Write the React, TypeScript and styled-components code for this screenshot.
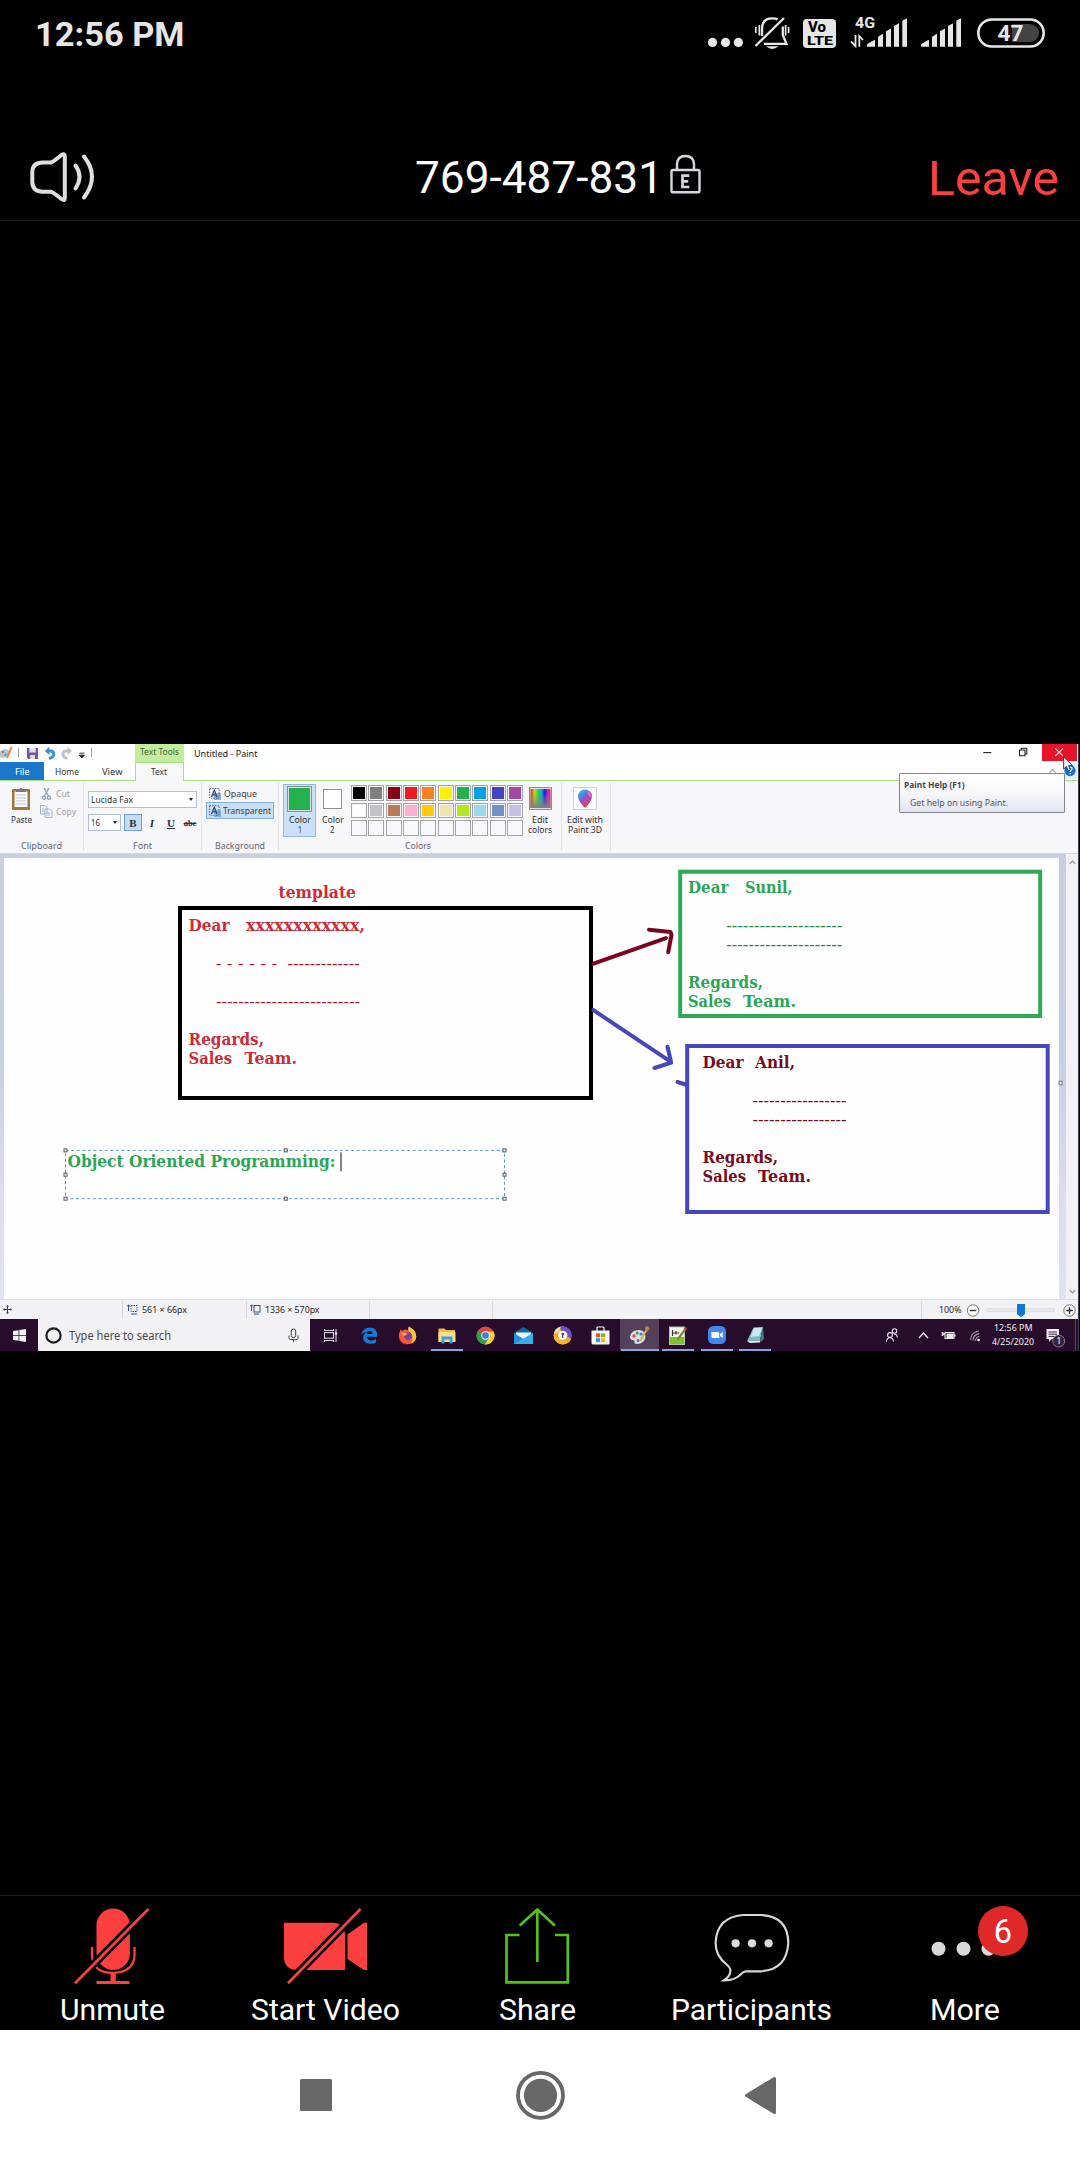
import React, { useLayoutEffect, useRef, useState } from "react";
import styled, { createGlobalStyle } from "styled-components";

const Global = createGlobalStyle`
  html, body { margin: 0; padding: 0; background: #000; }
  * { box-sizing: border-box; }
  svg { display: block; flex: none; }
`;

const Screen = styled.div`
  width: 1080px;
  height: 2160px;
  background: #000;
  display: flex;
  flex-direction: column;
  overflow: hidden;
  font-family: Roboto, "Liberation Sans", sans-serif;
  color: #fff;
`;

/* ---------- text that is condensed to a given width ---------- */
const FitBox = styled.span<{ $w: number }>`
  display: flex;
  flex: none;
  width: ${(p) => p.$w}px;
  white-space: pre;
`;
const FitInner = styled.span`
  flex: none;
  width: max-content;
  transform-origin: 0 50%;
`;
function Fit({ w, children }: { w: number; children: React.ReactNode }) {
  const ref = useRef<HTMLSpanElement>(null);
  const [scale, setScale] = useState(1);
  useLayoutEffect(() => {
    if (ref.current && ref.current.offsetWidth) {
      setScale(w / parseFloat(getComputedStyle(ref.current).width));
    }
  }, [w]);
  return (
    <FitBox $w={w}>
      <FitInner ref={ref} style={{ transform: `scaleX(${scale})` }}>{children}</FitInner>
    </FitBox>
  );
}

const Gap = styled.span<{ $w: number }>`
  flex: none;
  width: ${(p) => p.$w}px;
`;

/* ---------- phone status bar ---------- */
const StatusBar = styled.header`
  height: 68px;
  flex: none;
  display: flex;
  align-items: center;
  justify-content: space-between;
  padding: 0 35px 0 35px;
  color: #e6e6e6;
`;
const Clock = styled.div`
  font-size: 34px;
  font-weight: 700;
  line-height: 40px;
`;

function StatusIcons() {
  const bars = [
    "M0 28.5 L0 26.5 Q0 25.6 8 21.5 V28.5Z",
    "M11 18.5 L16 15.5 V28.5 H11Z",
    "M19 13 L24 10.2 V28.5 H19Z",
    "M27 7.6 L32 5 V28.5 H27Z",
    "M35.3 2.4 L40 0 V28.5 H35.3Z",
  ];
  return (
    <svg width="338" height="48" viewBox="707 10 338 48" fill="#e6e6e6">
      <circle cx="712.5" cy="42.4" r="4.6" />
      <circle cx="725.5" cy="42.4" r="4.6" />
      <circle cx="738.4" cy="42.4" r="4.6" />
      <g fill="none" stroke="#e6e6e6" strokeWidth="2.3">
        <path d="M755.5 46 L784 18" />
        <path d="M762 36 V29 Q762 18.4 772.3 18.4 Q775.5 18.4 777.5 19.4" />
        <path d="M782.8 26.5 V35 L786.5 43.8 H764" />
        <path d="M755.8 27 V33 M759.3 25 V35.5 M785.6 25 V35.5 M788.6 27 V33" strokeWidth="1.7" />
      </g>
      <path d="M766 46.3 H778.5 Q772.2 51.5 766 46.3Z" />
      <rect x="803" y="19" width="33" height="29" rx="4" />
      <g fill="#000" fontFamily="Roboto, sans-serif" fontWeight="800">
        <text x="808" y="32" fontSize="14" textLength="18" lengthAdjust="spacingAndGlyphs">Vo</text>
        <text x="807" y="45" fontSize="13.5" textLength="26" lengthAdjust="spacingAndGlyphs">LTE</text>
      </g>
      <text x="855" y="28" fontSize="15.5" fontWeight="700" fontFamily="Roboto, sans-serif" textLength="20" lengthAdjust="spacingAndGlyphs">4G</text>
      <g fill="none" stroke="#e6e6e6" strokeWidth="1.8">
        <path d="M855.5 35 V46 L851 41.5" />
        <path d="M859.3 46.7 V36 L863 40" />
      </g>
      <g transform="translate(867 18.3)">{bars.map((d) => <path key={d} d={d} />)}</g>
      <g transform="translate(921 18.3)">{bars.map((d) => <path key={d} d={d} />)}</g>
      <path d="M1012 24 H1030 A9 9 0 0 1 1030 42 H1012Z" fill="#434343" />
      <rect x="978.3" y="19.5" width="65.4" height="27" rx="13.5" fill="none" stroke="#e6e6e6" strokeWidth="2.6" />
      <text x="997.6" y="41.2" fontSize="22" fontWeight="700" fontFamily="Roboto, sans-serif" textLength="26" lengthAdjust="spacingAndGlyphs">47</text>
    </svg>
  );
}

/* ---------- meeting header ---------- */
const MeetingHeader = styled.div`
  height: 153px;
  flex: none;
  border-bottom: 1px solid #1c1c1c;
  display: grid;
  grid-template-columns: 1fr auto 1fr;
  align-items: start;
  padding: 80px 21px 0 30px;
`;
const MeetingId = styled.div`
  display: flex;
  align-items: flex-start;
  gap: 7px;
  font-size: 44.5px;
  line-height: 60px;
  margin-left: 27px;
`;
const LockWrap = styled.span`
  display: block;
  padding-top: 6px;
`;
const SpeakerButton = styled.button`
  all: unset;
  width: 66px;
  padding-top: 3px;
`;
const LeaveButton = styled.button`
  all: unset;
  justify-self: end;
  color: #fb403e;
  font-size: 49px;
  line-height: 61px;
`;

/* ---------- shared desktop ---------- */
const Stage = styled.main`
  height: 1675px;
  flex: none;
  border-bottom: 1px solid #1c1c1c;
  padding-top: 523px;
`;
const Desktop = styled.section`
  width: 1079px;
  height: 607px;
  background: #fff;
  display: flex;
  flex-direction: column;
  font-family: "Noto Sans", "Open Sans", sans-serif;
  font-size: 8.7px;
  line-height: 10px;
  color: #303036;
  border-right: 1px solid #3c3f58;
`;
const TitleBar = styled.div`
  height: 18px;
  flex: none;
  display: flex;
  align-items: stretch;
  background: #fefefe;
`;
const QuickAccess = styled.div`
  width: 135px;
  flex: none;
`;
const ContextTab = styled.div`
  width: 49px;
  background: #c3ec9d;
  padding: 3px 0 0 5px;
  color: #416a35;
`;
const WindowTitle = styled.div`
  padding: 5px 0 0 10px;
  flex: 1;
  color: #222;
`;
const WindowButtons = styled.div`
  display: flex;
`;
const TabRow = styled.div`
  height: 19px;
  flex: none;
  display: flex;
  border-bottom: 1px solid #a9db83;
  position: relative;
`;
const Tab = styled.div<{ $w: number; $pad: number; $kind?: "file" | "active" }>`
  width: ${(p) => p.$w}px;
  padding: 5px 0 0 ${(p) => p.$pad}px;
  ${(p) => p.$kind === "file" && "background: #1a77c9; color: #fff;"}
  ${(p) =>
    p.$kind === "active" &&
    "background: #f7f8f8; border: 1px solid #a9db83; border-bottom: 0; height: 19px; padding-top: 4px;"}
`;
const HelpArea = styled.div`
  margin-left: auto;
`;
const Tooltip = styled.div`
  position: absolute;
  left: 899px;
  top: 11px;
  width: 166px;
  height: 40px;
  border: 1px solid #85858d;
  border-radius: 1px;
  background: linear-gradient(#fff, #f7f7fb 50%, #e2e5f2);
  padding: 6px 0 0 4px;
  color: #55555c;
  z-index: 2;
`;
const TooltipTitle = styled.div`
  font-weight: 700;
  color: #45454b;
`;
const TooltipText = styled.div`
  padding: 8px 0 0 6px;
`;
const Cursor = styled.div`
  position: absolute;
  right: 4px;
  top: -6px;
  z-index: 3;
`;
const Ribbon = styled.div`
  height: 73px;
  flex: none;
  display: flex;
  background: #f7f6f9;
  border-bottom: 1px solid #d5d8e2;
  padding-top: 2px;
`;
const Group = styled.div<{ $w: number }>`
  width: ${(p) => p.$w}px;
  height: 68px;
  flex: none;
  display: flex;
  flex-direction: column;
  border-right: 1px solid #e1e1e7;
`;
const GroupBody = styled.div`
  height: 58px;
  flex: none;
  display: flex;
`;
const GroupName = styled.div`
  display: flex;
  justify-content: center;
  color: #64646c;
`;
const Column = styled.div<{ $w: number; $top?: number; $gap?: number }>`
  width: ${(p) => p.$w}px;
  flex: none;
  display: flex;
  flex-direction: column;
  align-items: center;
  padding-top: ${(p) => p.$top ?? 4}px;
  gap: ${(p) => p.$gap ?? 0}px;
`;
const SmallTool = styled.div<{ $muted?: boolean; $on?: boolean; $pad: number; $gap: number }>`
  display: flex;
  align-items: center;
  gap: ${(p) => p.$gap}px;
  padding-left: ${(p) => p.$pad}px;
  height: 17px;
  width: 100%;
  color: ${(p) => (p.$muted ? "#a0a0a6" : "#3c3c42")};
  ${(p) => p.$on && "background: #c9dff6; box-shadow: inset 0 0 0 1px #84aede;"}
`;
const FontArea = styled.div`
  padding: 8px 0 0 4px;
  display: flex;
  flex-direction: column;
  gap: 6px;
`;
const FontRow = styled.div`
  display: flex;
  align-items: center;
`;
const Combo = styled.div<{ $w: number }>`
  width: ${(p) => p.$w}px;
  height: 17px;
  background: #fff;
  border: 1px solid #b4bfd6;
  display: flex;
  align-items: center;
  justify-content: space-between;
  padding: 0 3px 0 2px;
`;
const Arrow = styled.i`
  border: 2.5px solid transparent;
  border-top: 3px solid #222;
  border-bottom: 0;
`;
const StyleButton = styled.div<{ $on?: boolean; $kind: "b" | "i" | "u" | "s" }>`
  width: 18px;
  height: 17px;
  margin-right: 1px;
  display: flex;
  align-items: center;
  justify-content: center;
  font-family: "Liberation Serif", serif;
  font-weight: 700;
  font-size: ${(p) => (p.$kind === "s" ? 8.5 : 11)}px;
  color: #2b3242;
  ${(p) => p.$on && "background: #c5dcf6; border: 1px solid #6d9ed6;"}
  ${(p) => p.$kind === "i" && "font-style: italic;"}
  ${(p) => p.$kind === "u" && "text-decoration: underline;"}
  ${(p) => p.$kind === "s" && "text-decoration: line-through;"}
`;
const ColorSlot = styled.div<{ $on?: boolean }>`
  width: 33px;
  height: 53px;
  margin-top: 1px;
  display: flex;
  flex-direction: column;
  align-items: center;
  ${(p) => p.$on && "background: #cbe0f6; box-shadow: inset 0 0 0 1px #92b9e2;"}
`;
const SlotSwatch = styled.div<{ $s: number; $c: string }>`
  width: ${(p) => p.$s}px;
  height: ${(p) => p.$s}px;
  margin: ${(p) => (28.5 - p.$s) / 2 + 0.5}px 0;
  flex: none;
  border: 1px solid #8a8f96;
  background: ${(p) => p.$c};
  box-shadow: inset 0 0 0 1px ${(p) => (p.$s > 20 ? "#d7dfe0" : "#fff")};
`;
const SlotLabel = styled.div`
  display: flex;
  flex-direction: column;
  align-items: center;
  padding-top: 1px;
`;
const Palette = styled.div`
  display: grid;
  grid-template-columns: repeat(10, 16px);
  grid-auto-rows: 15.7px;
  gap: 1.65px 1.33px;
  padding: 2.3px 0 0 2px;
  width: 179px;
  align-content: start;
`;
const Swatch = styled.div<{ $c?: string }>`
  border: 1px solid #a3a3a8;
  background: ${(p) => p.$c ?? "#f8f8fb"};
  box-shadow: inset 0 0 0 1px ${(p) => (p.$c ? "#f6f6f8" : "#fafafc")};
`;
const Workspace = styled.div`
  height: 445px;
  flex: none;
  display: flex;
  background: linear-gradient(#c9cfdf, #c6cfe3 45%, #dcdbef 75%, #dfe3f2);
`;
const PaintCanvas = styled.div`
  width: 1055px;
  margin: 4px 0 0 4px;
  background: #fefefe;
`;
const Gutter = styled.div`
  flex: 1;
`;
const ScrollBar = styled.div`
  width: 12px;
  background: #f3f1f6;
  display: flex;
  flex-direction: column;
  justify-content: space-between;
  align-items: center;
  padding: 6px 0 5px;
`;
const PaintStatus = styled.div`
  height: 20px;
  flex: none;
  display: flex;
  align-items: center;
  background: #f2f1f5;
  border-top: 1px solid #dcdce2;
  color: #26262c;
`;
const StatusCell = styled.div<{ $w?: number; $pad: number }>`
  ${(p) => (p.$w ? `width: ${p.$w}px;` : "flex: 1;")}
  height: 18px;
  display: flex;
  align-items: center;
  gap: 4px;
  padding-left: ${(p) => p.$pad}px;
  border-right: 1px solid #d6d6dc;
`;
const ZoomArea = styled.div`
  width: 156px;
  padding-left: 17px;
  display: flex;
  align-items: center;
`;
const Taskbar = styled.div`
  height: 32px;
  flex: none;
  display: flex;
  background: #270d2b;
`;
const StartButton = styled.div`
  width: 38px;
  display: flex;
  align-items: center;
  justify-content: center;
`;
const SearchBox = styled.div`
  width: 272px;
  margin-right: 1.5px;
  background: #f2f1f3;
  display: flex;
  align-items: center;
  padding: 1px 11px 0 7px;
  gap: 7px;
  font-size: 12px;
  line-height: 16px;
  color: #48484c;
  & > svg:last-child { margin-left: auto; }
`;
const TaskIcon = styled.div<{ $running?: boolean; $active?: boolean }>`
  width: 38.6px;
  flex: none;
  display: flex;
  align-items: center;
  justify-content: center;
  ${(p) => p.$active && "background: #544058;"}
  ${(p) => p.$running && "background-image: linear-gradient(#7fa9dc, #7fa9dc); background-size: " + (p.$active ? "38px" : "32px") + " 2px; background-repeat: no-repeat; background-position: 50% 100%;"}
`;
const Tray = styled.div`
  margin-left: auto;
  width: 192px;
  display: flex;
  align-items: center;
  color: #f0eef2;
  font-size: 9px;
`;
const TrayClock = styled.div`
  display: flex;
  flex-direction: column;
  align-items: center;
  gap: 4px;
  width: 42px;
  margin: 0 12px 0 11px;
`;

/* ---------- bottom toolbar ---------- */
const Controls = styled.nav`
  height: 134px;
  flex: none;
  display: grid;
  grid-template-columns: 225px 200px 225px 203px 223px;
  font-size: 30px;
  line-height: 36px;
`;
const Control = styled.button`
  all: unset;
  display: flex;
  flex-direction: column;
  align-items: center;
  position: relative;
`;
const ControlIcon = styled.span`
  height: 96px;
  padding-top: 8px;
`;
const Badge = styled.span`
  position: absolute;
  left: 125px;
  top: 10px;
  width: 50px;
  height: 50px;
  border-radius: 50%;
  background: #e02828;
  font-size: 32.5px;
  line-height: 52px;
  text-align: center;
`;

/* ---------- system navigation ---------- */
const SystemNav = styled.footer`
  flex: 1;
  background: #fff;
  display: flex;
  justify-content: center;
  padding-top: 36px;
`;

function QuickIcons() {
  return (
    <svg width="135" height="18" viewBox="0 744 135 18">
      <path d="M0 751 Q6 747 9 751 Q8 758 2 758 L0 757Z" fill="#b5c8d2" />
      <circle cx="3" cy="752" r="1.2" fill="#d25a52" /><circle cx="5.5" cy="755" r="1.2" fill="#5b95c8" />
      <path d="M7 758 L11.5 747" stroke="#d98c45" strokeWidth="2" />
      <path d="M18.5 748 V757 M91.5 748 V757" stroke="#9b9ba3" />
      <path d="M27 748 H38 V759 H28.5 L27 757.5Z" fill="#735798" />
      <path d="M29.3 748 H35.8 V752.5 H29.3Z M30.2 755 H35 V759 H30.2Z" fill="#e4dcef" />
      <path d="M47 751 H51 Q54.2 751.5 53.8 754.8 Q53.3 757.8 49 758.3" fill="none" stroke="#3b92cf" strokeWidth="2.8" />
      <path d="M44.7 751 L49.3 746.8 V755Z" fill="#3b92cf" />
      <path d="M69.5 751 H65.8 Q62.6 751.5 63 754.8 Q63.5 757.8 67.5 758.3" fill="none" stroke="#bcc3cb" strokeWidth="2.8" />
      <path d="M72 751 L67.5 746.8 V755Z" fill="#bcc3cb" />
      <path d="M79.3 753.2 H84.4 M79.3 755.2 H84.4 L81.8 758Z" stroke="#222" strokeWidth=".9" fill="#222" />
    </svg>
  );
}

function WindowControlIcons() {
  return (
    <svg width="104" height="18" viewBox="974 744 104 18" fill="none" stroke="#222" strokeWidth="1.1">
      <path d="M983.3 752.6 H991.3" />
      <path d="M1019.5 750 H1025 V755.8 H1019.5Z M1021.3 750 V748.3 H1026.8 V754 H1025" />
      <rect x="1042" y="744" width="35" height="17" fill="#e61428" stroke="none" />
      <path d="M1055.3 748.3 L1063 756 M1063 748.3 L1055.3 756" stroke="#ffd9dc" />
    </svg>
  );
}

function TextIcon() {
  return (
    <svg width="12" height="12" viewBox="0 0 12 12">
      <rect x="5" y="5" width="7" height="7" fill="#7fb5ec" />
      <rect x=".6" y=".6" width="9.5" height="9.6" fill="none" stroke="#4a5f80" strokeDasharray="1.4 1.2" />
      <path d="M2.5 9 L5.3 2.2 L8 9 M3.5 6.8 H7.2" fill="none" stroke="#34446a" strokeWidth="1.2" />
    </svg>
  );
}

const paletteColors = [
  "#000", "#7f7f7f", "#880015", "#ed1c24", "#ff7f27", "#fff200", "#22b14c", "#00a2e8", "#4643c8", "#a349a4",
  "#fff", "#c3c3c3", "#b97a57", "#ffaec9", "#ffc90e", "#efe4b0", "#b5e61d", "#99d9ea", "#7092be", "#c8bfe7",
];

function PaintRibbon() {
  return (
    <Ribbon>
      <Group $w={84}>
        <GroupBody>
          <Column $w={42} $gap={5}>
            <svg width="20" height="23" viewBox="0 0 20 23">
              <rect x="1" y="2" width="18" height="21" rx="1" fill="#a0753e" />
              <rect x="3.5" y="4.5" width="13" height="15.5" fill="#f7f9fb" />
              <path d="M5 8 H15 M5 11 H15 M5 14 H15 M5 17 H15" stroke="#b7c5d6" />
              <path d="M5 5 V2.5 H8 Q10 -1 12 2.5 H15 V5Z" fill="#767b82" />
            </svg>
            <Fit w={21}>Paste</Fit>
          </Column>
          <Column $w={41} $top={2} $gap={1}>
            <SmallTool $muted $pad={0} $gap={3}>
              <svg width="11" height="12" viewBox="0 0 11 12" fill="none" stroke="#93a3b5" strokeWidth="1.4">
                <path d="M2 0 L6.5 8 M7 0 L2.5 8" /><circle cx="2" cy="9.7" r="1.6" /><circle cx="7" cy="9.7" r="1.6" />
              </svg>
              <Fit w={14}>Cut</Fit>
            </SmallTool>
            <SmallTool $muted $pad={0} $gap={3}>
              <svg width="11" height="13" viewBox="1 0 11 13" overflow="visible" fill="#f6f8fb" stroke="#a0b2cc">
                <path d="M-.5 .5 H4 L6 2.5 V9 H-.5Z M4 4 H8.5 L11 6.3 V12.5 H4Z M1 4 H3 M1 6 H3 M6 8 H9 M6 10 H9" />
              </svg>
              <Fit w={20}>Copy</Fit>
            </SmallTool>
          </Column>
        </GroupBody>
        <GroupName><Fit w={41}>Clipboard</Fit></GroupName>
      </Group>
      <Group $w={118}>
        <GroupBody>
          <FontArea>
            <Combo $w={109}><Fit w={42}>Lucida Fax</Fit><Arrow /></Combo>
            <FontRow>
              <Combo $w={33}><Fit w={9}>16</Fit><Arrow /></Combo>
              <Gap $w={3} />
              <StyleButton $kind="b" $on>B</StyleButton>
              <StyleButton $kind="i">I</StyleButton>
              <StyleButton $kind="u">U</StyleButton>
              <StyleButton $kind="s">abc</StyleButton>
            </FontRow>
          </FontArea>
        </GroupBody>
        <GroupName><Fit w={19}>Font</Fit></GroupName>
      </Group>
      <Group $w={77}>
        <GroupBody>
          <Gap $w={4} />
          <Column $w={68} $top={2}>
            <SmallTool $pad={3} $gap={3}><TextIcon /><Fit w={33}>Opaque</Fit></SmallTool>
            <SmallTool $on $pad={3} $gap={2}><TextIcon /><Fit w={48}>Transparent</Fit></SmallTool>
          </Column>
        </GroupBody>
        <GroupName><Fit w={50}>Background</Fit></GroupName>
      </Group>
      <Group $w={283}>
        <GroupBody>
          <Gap $w={4} />
          <ColorSlot $on>
            <SlotSwatch $s={25.5} $c="#22b14c" />
            <SlotLabel><Fit w={22}>Color</Fit><Fit w={4}>1</Fit></SlotLabel>
          </ColorSlot>
          <ColorSlot>
            <SlotSwatch $s={19.5} $c="#fff" />
            <SlotLabel><Fit w={22}>Color</Fit><Fit w={4.5}>2</Fit></SlotLabel>
          </ColorSlot>
          <Palette>
            {Array.from({ length: 30 }, (_, i) => <Swatch key={i} $c={paletteColors[i]} />)}
          </Palette>
          <Column $w={24}>
            <ColorfulIcon />
            <SlotLabel><Fit w={16}>Edit</Fit><Fit w={24}>colors</Fit></SlotLabel>
          </Column>
        </GroupBody>
        <GroupName><Fit w={26}>Colors</Fit><Gap $w={4} /></GroupName>
      </Group>
      <Group $w={49}>
        <GroupBody>
          <Column $w={46} $top={4}>
            <Paint3DIcon />
            <SlotLabel><Fit w={36}>Edit with</Fit><Fit w={34}>Paint 3D</Fit></SlotLabel>
          </Column>
        </GroupBody>
      </Group>
    </Ribbon>
  );
}

function ColorfulIcon() {
  return (
    <svg width="23" height="27" viewBox="0 0 23 27">
      <defs>
        <linearGradient id="hue">
          <stop offset="0" stopColor="#c8342c" /><stop offset=".2" stopColor="#c6d31b" /><stop offset=".4" stopColor="#22d34e" />
          <stop offset=".55" stopColor="#18a6d8" /><stop offset=".72" stopColor="#1a1ed8" /><stop offset=".86" stopColor="#d51ee0" /><stop offset="1" stopColor="#e0303a" />
        </linearGradient>
        <linearGradient id="fadeGrey" x2="0" y2="1"><stop offset=".25" stopColor="#888" stopOpacity="0" /><stop offset="1" stopColor="#808080" /></linearGradient>
      </defs>
      <rect x=".5" y=".5" width="22" height="22" fill="#ddd" stroke="#8f8f93" />
      <rect x="1.5" y="2" width="20" height="19" fill="url(#hue)" />
      <rect x="1.5" y="2" width="20" height="19" fill="url(#fadeGrey)" />
    </svg>
  );
}

function Paint3DIcon() {
  return (
    <svg width="24" height="27" viewBox="0 0 24 27">
      <defs>
        <linearGradient id="drop" x1="0" y1="0" x2=".6" y2="1">
          <stop offset="0" stopColor="#3ad0e6" /><stop offset=".35" stopColor="#4a86e4" /><stop offset=".6" stopColor="#a34bc4" /><stop offset="1" stopColor="#e8423c" />
        </linearGradient>
      </defs>
      <rect x=".5" y=".5" width="23" height="22" fill="#fbfbfc" stroke="#cfcfd4" />
      <path d="M12 21 Q5 14 5 9 A7 6.5 0 0 1 19 9 Q19 14 12 21Z" fill="url(#drop)" />
      <path d="M14 4 Q18.5 6 18.5 10 Q15 10 14 4Z" fill="#e36fc4" />
    </svg>
  );
}

type Word = [number, number, number, string];
function Writing({ words, color, weight = 700 }: { words: Word[]; color: string; weight?: number }) {
  return (
    <g fill={color} fontFamily="'DejaVu Serif', serif" fontWeight={weight} fontSize="15.8">
      {words.map(([x, y, w, t]) => (
        <text key={`${x}-${y}`} x={x} y={y - 0.8} textLength={w} lengthAdjust="spacingAndGlyphs">{t}</text>
      ))}
    </g>
  );
}

const handles: [number, number][] = [
  [66, 1150.7], [286.3, 1150.7], [505, 1150.7], [66, 1175], [505, 1175], [66, 1199], [286.3, 1199], [505, 1199],
];

function Drawing() {
  return (
    <svg width="1062" height="441" viewBox="4.5 858.3 1062 441">
      <rect x="180.5" y="908.3" width="411" height="190" fill="none" stroke="#000" strokeWidth="4" />
      <rect x="680.7" y="872" width="360" height="144.3" fill="none" stroke="#2fa957" strokeWidth="4" />
      <rect x="687.7" y="1046.3" width="360.5" height="166" fill="none" stroke="#4747bd" strokeWidth="4" />
      <g fill="none" strokeWidth="4" strokeLinecap="round" strokeLinejoin="round">
        <path d="M594 964 L666.5 938.5 M649.5 930 L671 932.3 L672 935.5 L668.7 952.5" stroke="#7a0420" />
        <path d="M594 1010.5 L671 1062 M668 1047 L671.7 1063 L655 1068.3 M678 1082.3 L686 1084.8" stroke="#4747bd" />
      </g>
      <Writing color="#cb2c36" words={[
        [279, 899, 77.5, "template"], [189, 932, 41, "Dear"], [246.5, 932, 119, "xxxxxxxxxxxx,"],
        [189, 1046, 75.5, "Regards,"], [189, 1065, 43.5, "Sales"], [245, 1065, 52.5, "Team."],
      ]} />
      <Writing color="#a01c34" weight={400} words={[
        [216.2, 970, 61.5, "- - - - - -"], [288, 970, 72.3, "-------------"], [216.5, 1008, 144, "--------------------------"],
      ]} />
      <Writing color="#2ba657" words={[
        [688.5, 894, 40.5, "Dear"], [745.5, 894, 47.5, "Sunil,"], [688.5, 989, 75, "Regards,"], [688.5, 1008, 43, "Sales"], [743.5, 1008, 53, "Team."],
        [68, 1168, 268, "Object Oriented Programming:"],
      ]} />
      <Writing color="#23894f" weight={400} words={[[726.8, 932, 116, "---------------------"], [726.8, 951, 116, "---------------------"]]} />
      <Writing color="#760a20" words={[
        [703, 1069, 41, "Dear"], [755.5, 1069, 40, "Anil,"], [703, 1164, 75.5, "Regards,"], [703, 1183, 43.5, "Sales"], [758.5, 1183, 53, "Team."],
      ]} />
      <Writing color="#760a20" weight={400} words={[[753, 1107, 94, "-----------------"], [753, 1126, 94, "-----------------"]]} />
      <rect x="66" y="1150.7" width="439" height="48.3" fill="none" stroke="#5a98c0" strokeDasharray="3 2.6" />
      <path d="M341.5 1152.5 V1171.5" stroke="#222" strokeWidth="1.1" />
      {handles.map(([x, y]) => (
        <rect key={`${x}/${y}`} x={x - 1.5} y={y - 1.5} width="3" height="3" fill="#fff" stroke="#555" strokeWidth="1" />
      ))}
      <rect x="1059.5" y="1081.5" width="3" height="3.6" fill="#fff" stroke="#777" />
    </svg>
  );
}

function Chevron({ up }: { up?: boolean }) {
  return (
    <svg width="7" height="5" viewBox="0 0 7 5" fill="none" stroke="#9b9ba2" strokeWidth="1.2">
      <path d={up ? "M.8 4 L3.5 1 L6.2 4" : "M.8 1 L3.5 4 L6.2 1"} />
    </svg>
  );
}

function PaintStatusBar() {
  return (
    <PaintStatus>
      <StatusCell $w={123} $pad={3}>
        <svg width="9" height="9" viewBox="0 0 9 9" stroke="#3a4658" fill="#3a4658">
          <path d="M4.5 1 V8 M1 4.5 H8" />
          <path d="M4.5 0 L3.5 1.5 H5.5Z M4.5 9 L3.5 7.5 H5.5Z M0 4.5 L1.5 3.5 V5.5Z M9 4.5 L7.5 3.5 V5.5Z" strokeWidth=".4" />
        </svg>
      </StatusCell>
      <StatusCell $w={124} $pad={4}>
        <svg width="11" height="11" viewBox="0 0 11 11" fill="none" stroke="#35506e">
          <path d="M1.5 1 V7 M0 2.5 L1.5 .8 L3 2.5 M4 10 H10" /><rect x="4" y="1.5" width="6" height="6" strokeDasharray="1.5 1" />
        </svg>
        <Fit w={45}>561 × 66px</Fit>
      </StatusCell>
      <StatusCell $w={122.5} $pad={3}>
        <svg width="11" height="11" viewBox="0 0 11 11" fill="none" stroke="#35506e">
          <path d="M1.5 1 V7 M0 2.5 L1.5 .8 L3 2.5 M4 10 H9" /><rect x="4" y="1.5" width="6" height="6.5" />
        </svg>
        <Fit w={54.5}>1336 × 570px</Fit>
      </StatusCell>
      <StatusCell $w={123.5} $pad={0} />
      <StatusCell $pad={0} />
      <ZoomArea>
        <Fit w={22.5}>100%</Fit>
        <svg width="117" height="18" viewBox="962 1300 117 18">
          <circle cx="973" cy="1309.5" r="5.7" fill="#fafafa" stroke="#77777c" />
          <path d="M969.8 1309.5 H976.2" stroke="#33333a" strokeWidth="1.4" />
          <rect x="987" y="1307.8" width="67.5" height="2.6" fill="#e9e9ec" stroke="#d3d3d8" strokeWidth=".6" />
          <path d="M1017 1303 H1025 V1313 L1021 1316.3 L1017 1313Z" fill="#0a78d4" />
          <circle cx="1069.5" cy="1309.5" r="5.7" fill="#fafafa" stroke="#77777c" />
          <path d="M1066.2 1309.5 H1072.8 M1069.5 1306.2 V1312.8" stroke="#33333a" strokeWidth="1.4" />
        </svg>
      </ZoomArea>
    </PaintStatus>
  );
}

function AppIcons() {
  return (
    <>
      <TaskIcon>
        <svg width="14" height="13" viewBox="0.5 0 14 13" fill="none" stroke="#d9d4dc" strokeWidth="1.1">
          <path d="M1 0 V1.5 H10 V0 M1 13 V11.5 H10 V13 M12.5 0 V13" /><rect x="1" y="3.6" width="9" height="5.6" />
          <path d="M11.3 4.5 H13.7" strokeWidth="2.4" />
        </svg>
      </TaskIcon>
      <TaskIcon>
        <svg width="17" height="17" viewBox="0 0 17 17">
          <path d="M.3 7.5 Q2 .5 8.8 .4 Q16 .8 16.2 8 V9.8 H5.6 Q6 13.2 9.7 13.4 Q12.6 13.5 15 12 V15.4 Q12.5 16.8 9.3 16.7 Q3 16.4 2.2 11.2 Q1.8 7 6.3 4.4 Q3 4.8 .3 7.5Z M5.7 6.9 H11.5 Q11.4 3.9 8.7 3.8 Q6 4 5.7 6.9Z" fill="#147bd4" fillRule="evenodd" />
        </svg>
      </TaskIcon>
      <TaskIcon>
        <svg width="19" height="19" viewBox="0 0 19 19">
          <path d="M1 8 L2.5 3.5 L4.5 5 Q8 2.5 9.5 4.5 L11 .5 Q18 4 18.3 10.5 A8.8 8.4 0 0 1 .8 10.8Z" fill="#fb5a2c" />
          <path d="M10.5 .6 Q18 4 18.3 10.5 A8.6 8.4 0 0 1 13 17.8 Q17 10 10.3 5Z" fill="#ffc33c" />
          <path d="M1 9 Q1.5 17 9.5 18.4 Q5 19 2.4 15.5 Q.6 13 1 9Z" fill="#e0265e" />
          <circle cx="10" cy="9.8" r="3.9" fill="#7440a8" />
          <path d="M4 6.5 L9.5 7 L8 9.2 L5.5 10Z" fill="#ffa63a" />
        </svg>
      </TaskIcon>
      <TaskIcon $running>
        <svg width="18" height="17" viewBox="0 0 18 17">
          <path d="M.5 1.5 H6.5 L8 3 H17 V15 H.5Z" fill="#e9bd52" /><path d="M.5 5 H17.5 V15 H.5Z" fill="#f8dd8b" />
          <path d="M3.5 9.5 H14.5 V16.5 H11.7 V12.5 H6.3 V16.5 H3.5Z" fill="#3aa0d8" />
        </svg>
      </TaskIcon>
      <TaskIcon>
        <svg width="19" height="19" viewBox="0 0 19 19">
          <circle cx="9.5" cy="9.5" r="9" fill="#e2463b" />
          <path d="M9.5 9.5 L1.7 5 A9 9 0 0 0 8.8 18.5 L13.4 11.7Z" fill="#2da14f" />
          <path d="M9.5 5.4 H17.6 A9 9 0 0 1 8.8 18.5 L13 11.6Z" fill="#fbcf3b" />
          <circle cx="9.5" cy="9.5" r="4.2" fill="#f4f4f4" /><circle cx="9.5" cy="9.5" r="3.3" fill="#3f7fdc" />
        </svg>
      </TaskIcon>
      <TaskIcon>
        <svg width="19" height="17" viewBox="0 0 19 17">
          <path d="M0 6 L9.5 0 L19 6 V17 H0Z" fill="#0c67b0" /><path d="M2 5.5 H17 V10 L9.5 13 L2 10Z" fill="#f3f7fb" />
          <path d="M0 6 L9.5 12 L19 6 V17 H0Z" fill="#1d93dc" /><path d="M0 17 L13 9.6 L19 6 V17Z" fill="#35aeea" />
        </svg>
      </TaskIcon>
      <TaskIcon>
        <svg width="19" height="19" viewBox="0 0 19 19">
          <circle cx="9.5" cy="9.5" r="9" fill="#f6a623" /><path d="M6 1 A9 9 0 0 1 18 12.5 L11 9Z" fill="#6b50c8" />
          <path d="M.7 8 A9 9 0 0 1 8 .7 L6 6Z" fill="#f2d9b8" /><path d="M.6 9 Q2 18 10 18.4 Q17 18 18 12 Q13 16 8 14Z" fill="#f9b52c" />
          <circle cx="9.7" cy="9.3" r="4.6" fill="#fff" /><path d="M9.7 7.5 V12" stroke="#49405c" strokeWidth="1.2" /><circle cx="9.7" cy="8" r="1.3" fill="#49405c" />
        </svg>
      </TaskIcon>
      <TaskIcon>
        <svg width="19" height="19" viewBox="0 0 19 19">
          <path d="M6 5 V2 Q6 1 7 1 H12 Q13 1 13 2 V5" fill="none" stroke="#f4f4f4" strokeWidth="1.2" />
          <path d="M.5 4.5 H18.5 V17.5 Q18.5 18.5 17.5 18.5 H2 Q.5 18.5 .5 17Z" fill="#fafafa" />
          <path d="M5 7.3 H9.1 V11.3 H5Z" fill="#e2542e" /><path d="M10 7.3 H14.1 V11.3 H10Z" fill="#7cb82e" />
          <path d="M5 12.2 H9.1 V16.2 H5Z" fill="#2d9fe0" /><path d="M10 12.2 H14.1 V16.2 H10Z" fill="#f6b61c" />
        </svg>
      </TaskIcon>
      <TaskIcon $running $active>
        <svg width="21" height="19" viewBox="0 0 21 19">
          <path d="M1 11 Q2 4 10 4 Q17 5 16.5 11 Q15.5 17.5 8 18 Q5 18 5.5 15.5 Q5.5 13.5 3 14 Q1 13.7 1 11Z" fill="#d5e2ea" />
          <circle cx="5" cy="10" r="1.7" fill="#d8473c" /><circle cx="8.3" cy="7" r="1.5" fill="#3d9a4c" /><circle cx="12" cy="8" r="1.5" fill="#3f7cc4" /><circle cx="9" cy="14.6" r="1.5" fill="#8a56b4" />
          <path d="M11 15 L17.5 4" stroke="#dca45a" strokeWidth="2" /><path d="M16.5 4.5 L16 1 L19 0 L20.5 3 L18.5 5.5Z" fill="#b28a53" />
        </svg>
      </TaskIcon>
      <TaskIcon $running>
        <svg width="18" height="19" viewBox="0 0 18 19">
          <rect x=".5" y="1" width="15" height="17.5" fill="#f2f5ec" stroke="#b9c4a4" /><path d="M1 11 H15 V18 H1Z" fill="#79c42a" />
          <path d="M3.5 4 V10 M3.5 7 H10 M7 5 V8.5" stroke="#333" strokeWidth="1.2" /><path d="M8.5 13.5 L16.5 3" stroke="#7a8a2a" strokeWidth="2.2" /><circle cx="16.3" cy="2.5" r="1.5" fill="#b5473c" />
        </svg>
      </TaskIcon>
      <TaskIcon $running>
        <svg width="18" height="18" viewBox="0 0 18 18">
          <rect width="18" height="18" rx="5.5" fill="#4187ee" /><path d="M3.4 6 H9.5 Q11.3 6 11.3 7.6 V12 H5 Q3.4 12 3.4 10.4Z M12 8 L14.8 6 V12 L12 10Z" fill="#fff" />
        </svg>
      </TaskIcon>
      <TaskIcon $running>
        <svg width="19" height="18" viewBox="0 0 19 18">
          <path d="M7.5 1.5 L17 1 L14 14.5 L1 15Z" fill="#79bcc9" /><path d="M8 2 L16.5 1.5 L13 10 L4.5 11Z" fill="#c8eaef" />
          <path d="M1 15 L14 14.5 V16.5 L4 17Z" fill="#e4eef0" /><path d="M17 1 L18 13 L14.5 16.5 L14 14Z" fill="#3f7884" />
        </svg>
      </TaskIcon>
    </>
  );
}

function TaskbarRow() {
  return (
    <Taskbar>
      <StartButton>
        <svg width="13" height="13" viewBox="0 0 13 13" fill="#f2f0f3">
          <path d="M0 2 L5.6 1.2 V6.1 H0Z M6.3 1.1 L13 0 V6.1 H6.3Z M0 6.8 H5.6 V11.8 L0 11Z M6.3 6.8 H13 V13 L6.3 11.9Z" />
        </svg>
      </StartButton>
      <SearchBox>
        <svg width="17" height="17" viewBox="0 0 17 17"><circle cx="8.5" cy="8.5" r="7.1" fill="none" stroke="#1d1d20" strokeWidth="2.2" /></svg>
        <Fit w={102}>Type here to search</Fit>
        <svg width="11" height="15" viewBox="0 0 11 15" fill="none" stroke="#444">
          <rect x="3.3" y="1" width="4.4" height="8.5" rx="2" /><path d="M1 7.5 V10 Q1.2 11.7 3 11.7 H8 Q9.8 11.7 10 10 V7.5 M5.5 11.7 V14" />
        </svg>
      </SearchBox>
      <AppIcons />
      <Tray>
        <svg width="95" height="32" viewBox="886 1319 95 32" fill="none" stroke="#e9e6eb" strokeWidth="1.1">
          <circle cx="890" cy="1335" r="2.4" /><path d="M886.5 1341.5 Q887 1337.8 890 1337.8 Q893 1337.8 893.5 1341.5" />
          <circle cx="894.5" cy="1331" r="2.2" /><path d="M893.8 1334 Q897 1334 897.3 1337.5" />
          <path d="M919 1338 L923.5 1333 L928 1338" strokeWidth="1.3" />
          <path d="M945 1332.5 H954 V1338.5 H945Z M955 1334.5 V1336.5" /><path d="M947 1334 H953 V1337.5 H947Z" fill="#e9e6eb" />
          <path d="M941.8 1334 H945 M942.5 1332 V1336" strokeWidth="1.6" />
          <path d="M970.5 1340 Q971 1332 979 1331 M973 1340.5 Q973.5 1334.5 979.3 1333.6 M975.3 1340.8 Q976 1337 979.3 1336.2" stroke="#a59dab" />
          <circle cx="978.5" cy="1340" r="1.3" fill="#fff" stroke="none" />
        </svg>
        <TrayClock>
          <Fit w={38.5}>12:56 PM</Fit>
          <Fit w={42}>4/25/2020</Fit>
        </TrayClock>
        <svg width="32" height="32" viewBox="1046 1319 32 32">
          <path d="M1046.5 1329 H1059 V1339 H1051.5 L1049 1342 V1339 H1046.5Z" fill="#f4f2f5" />
          <path d="M1048.5 1332 H1057 M1048.5 1334.2 H1057 M1048.5 1336.4 H1054" stroke="#2a102e" strokeWidth=".9" />
          <circle cx="1058.7" cy="1341" r="6" fill="#35243c" stroke="#85788c" />
          <text x="1056.3" y="1344.3" fontSize="9" fill="#fff">1</text>
          <path d="M1075.5 1319 V1351" stroke="#5b4760" />
        </svg>
      </Tray>
    </Taskbar>
  );
}

function SharedDesktop() {
  return (
    <Desktop>
      <TitleBar>
        <QuickAccess><QuickIcons /></QuickAccess>
        <ContextTab><Fit w={39}>Text Tools</Fit></ContextTab>
        <WindowTitle><Fit w={63.5}>Untitled - Paint</Fit></WindowTitle>
        <WindowButtons><WindowControlIcons /></WindowButtons>
      </TitleBar>
      <TabRow>
        <Tab $w={44} $pad={15} $kind="file"><Fit w={14.5}>File</Fit></Tab>
        <Tab $w={47} $pad={11}><Fit w={24}>Home</Fit></Tab>
        <Tab $w={44} $pad={10.5}><Fit w={20.5}>View</Fit></Tab>
        <Tab $w={48.5} $pad={15} $kind="active"><Fit w={16}>Text</Fit></Tab>
        <HelpArea>
          <svg width="32" height="18" viewBox="1046 762 32 18">
            <rect x="1064" y="762" width="13" height="17" fill="#e1effb" />
            <path d="M1049.5 772.5 L1052.5 769.5 L1055.5 772.5" fill="none" stroke="#a3a3aa" strokeWidth="1.2" />
            <circle cx="1070" cy="770.6" r="5.6" fill="#1471c4" />
            <path d="M1068 769 Q1068.3 767 1070.2 767 Q1072.3 767.2 1072 769 Q1071.8 770 1070.2 771 V772 M1070.2 773 V774.5" fill="none" stroke="#fff" strokeWidth="1.2" />
          </svg>
        </HelpArea>
        <Tooltip>
          <TooltipTitle><Fit w={60.5}>Paint Help (F1)</Fit></TooltipTitle>
          <TooltipText><Fit w={98}>Get help on using Paint.</Fit></TooltipText>
        </Tooltip>
        <Cursor>
          <svg width="11" height="16" viewBox="0 0 11 16">
            <path d="M.7 .8 V13 L3.5 10.4 L5.3 14.8 L7.4 13.9 L5.6 9.7 H9.5Z" fill="#fff" stroke="#2c3444" />
          </svg>
        </Cursor>
      </TabRow>
      <PaintRibbon />
      <Workspace>
        <PaintCanvas><Drawing /></PaintCanvas>
        <Gutter />
        <ScrollBar><Chevron up /><Chevron /></ScrollBar>
      </Workspace>
      <PaintStatusBar />
      <TaskbarRow />
    </Desktop>
  );
}

export default function App() {
  return (
    <Screen>
      <Global />
      <StatusBar>
        <Clock><Fit w={149.5}>12:56 PM</Fit></Clock>
        <StatusIcons />
      </StatusBar>
      <MeetingHeader>
        <SpeakerButton aria-label="Speaker">
          <svg width="66" height="52" viewBox="30 150 66 52" fill="none" stroke="#dedede" strokeWidth="4" strokeLinejoin="round" strokeLinecap="round">
            <path d="M51 161.5 H43 Q32.5 161.5 32.3 171 V181 Q32.5 190.7 43 190.7 H51 Q53 191 61.5 198 Q64.8 200.5 64.8 197 V155.5 Q64.8 151.8 61.5 154 Q53 161 51 161.5Z" />
            <path d="M75.5 164.5 Q83.5 175.5 75.5 187.5" />
            <path d="M84 155.5 Q100 175.5 84 196.5" />
          </svg>
        </SpeakerButton>
        <MeetingId>
          <Fit w={248}>769-487-831</Fit>
          <LockWrap>
            <svg width="31" height="40" viewBox="669.5 154 31 40" fill="none" stroke="#d6d6de" strokeWidth="2.4">
              <rect x="671" y="170" width="28" height="22.3" rx="1.5" />
              <path d="M676.5 170 V164 Q677 156 685 156 Q693 156 693.5 164 V170" />
              <path d="M688.8 175.6 H682 V187 H688.8 M682 181.3 H687.8" strokeWidth="2.7" />
            </svg>
          </LockWrap>
        </MeetingId>
        <LeaveButton><Fit w={131}>Leave</Fit></LeaveButton>
      </MeetingHeader>
      <Stage>
        <SharedDesktop />
      </Stage>
      <Controls>
        <Control>
          <ControlIcon>
            <svg width="78" height="82" viewBox="73.5 1904 78 82" overflow="visible">
              <rect x="96" y="1908.5" width="33.4" height="61.5" rx="16.7" fill="#fc3f3f" />
              <path d="M91.5 1947 V1955 Q92 1973 112.7 1973 Q133.5 1972 134 1955 V1947" fill="none" stroke="#fc3f3f" strokeWidth="2.3" />
              <path d="M110 1973 H115.3 V1981 H129 V1984 H96 V1981 H110Z" fill="#fc3f3f" />
              <path d="M148 1909 L74.5 1983" stroke="#000" strokeWidth="8" />
              <path d="M148 1909 L74.5 1983.3" stroke="#ee4444" strokeWidth="2.8" />
            </svg>
          </ControlIcon>
          <Fit w={105}>Unmute</Fit>
        </Control>
        <Control>
          <ControlIcon>
            <svg width="86" height="82" viewBox="282 1904 86 82">
              <path d="M284 1922.7 H333 Q345 1923 345 1935 V1970 H296 Q284 1969 284 1957Z M347.5 1934.5 L364 1922.7 H367 V1970 H364 L347.5 1959Z" fill="#fc3f3f" />
              <path d="M360.5 1909 L288 1983" stroke="#000" strokeWidth="8" />
              <path d="M360.5 1909 L288 1983.3" stroke="#ee4444" strokeWidth="2.8" />
            </svg>
          </ControlIcon>
          <Fit w={149}>Start Video</Fit>
        </Control>
        <Control>
          <ControlIcon>
            <svg width="66" height="82" viewBox="505 1904 66 82" fill="none" stroke="#56c116" strokeWidth="2.7">
              <path d="M519.5 1935 H506.5 V1982.4 H567.8 V1935 H555" />
              <path d="M537.3 1909 V1962 M519.7 1925.5 L537.3 1909.5 L554.8 1925.5" />
            </svg>
          </ControlIcon>
          <Fit w={77}>Share</Fit>
        </Control>
        <Control>
          <ControlIcon>
            <svg width="78" height="82" viewBox="712.4 1904 78 82" fill="#dcdcdc">
              <path d="M742 1915 H761 Q787.5 1916.5 787.7 1943 Q786 1970 760 1971.3 H745 Q742 1972 739 1975.5 Q733 1980.5 723.5 1980.3 Q730.5 1976 729.7 1969.5 Q729 1967 726 1964.5 Q715 1956 715 1943 Q716 1917.5 742 1915Z" fill="none" stroke="#d6d6d6" strokeWidth="2.2" />
              <circle cx="735" cy="1943.3" r="4.1" /><circle cx="751.4" cy="1943.3" r="4.1" /><circle cx="768" cy="1943.3" r="4.1" />
            </svg>
          </ControlIcon>
          <Fit w={161}>Participants</Fit>
        </Control>
        <Control>
          <ControlIcon>
            <svg width="70" height="82" viewBox="929.5 1904 70 82" fill="#d9d9d9">
              <circle cx="938" cy="1948.8" r="7" /><circle cx="963" cy="1948.8" r="7" /><circle cx="988" cy="1948.8" r="7" />
            </svg>
          </ControlIcon>
          <Fit w={70}>More</Fit>
          <Badge>6</Badge>
        </Control>
      </Controls>
      <SystemNav>
        <svg width="500" height="60" viewBox="290 2066 500 60" fill="#676767">
          <rect x="300" y="2079" width="32" height="32" rx="1.5" />
          <circle cx="540.5" cy="2095.3" r="16.6" />
          <circle cx="540.5" cy="2095.3" r="22.5" fill="none" stroke="#676767" strokeWidth="3.8" />
          <path d="M774.5 2078.5 V2112.5 L746.5 2095.5Z" stroke="#676767" strokeWidth="3" strokeLinejoin="round" />
        </svg>
      </SystemNav>
    </Screen>
  );
}
